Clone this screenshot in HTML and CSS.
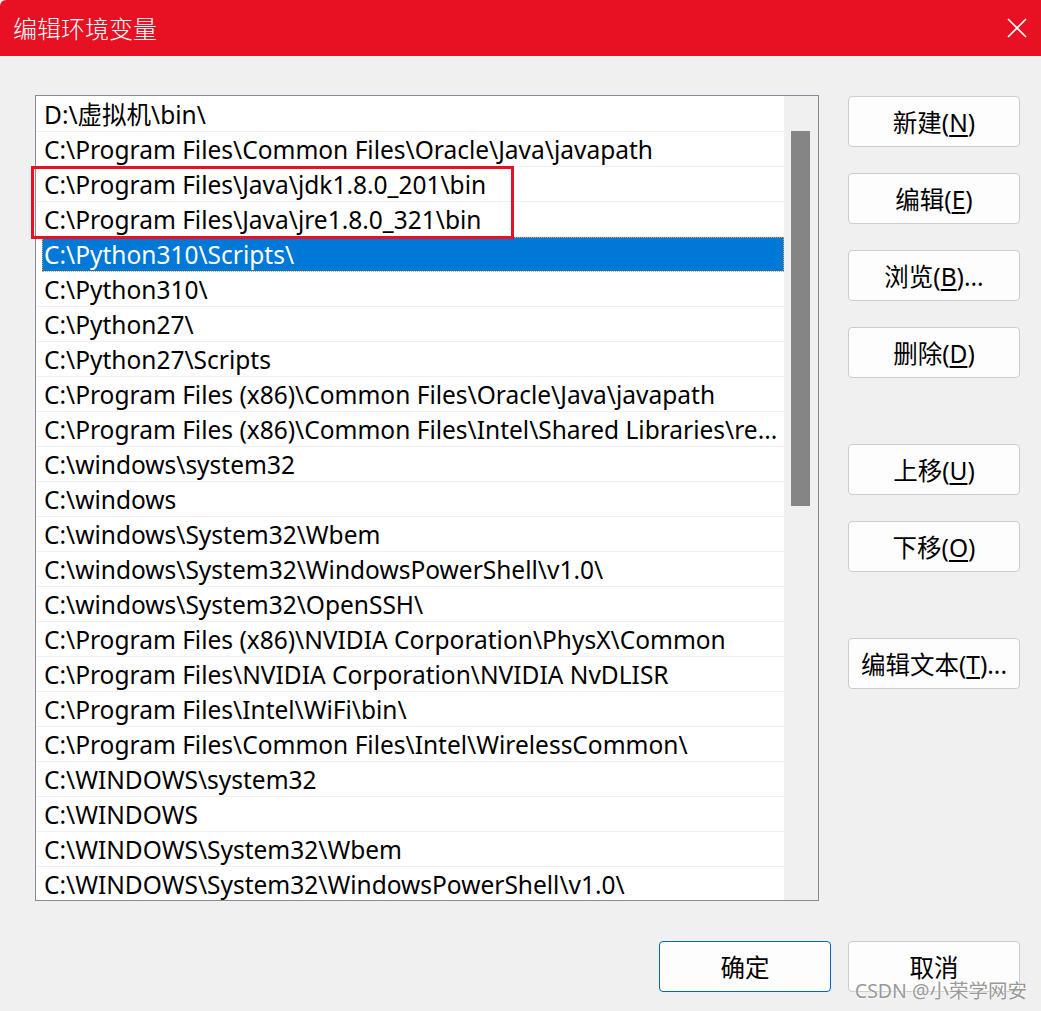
FILE: index.html
```html
<!DOCTYPE html>
<html lang="zh-CN">
<head>
    <meta charset="UTF-8">
    <meta name="viewport" content="width=device-width, initial-scale=1.0">
    <title>编辑环境变量</title>
    <link rel="stylesheet" href="styles.css">
</head>
<body>

<div class="window">
    <div class="titlebar">
        <span class="title">编辑环境变量</span>
        <svg class="close" width="20" height="20" viewBox="0 0 20 20">
            <path d="M1 1 L19 19 M19 1 L1 19" stroke="#fff" stroke-width="1.6" fill="none"/>
        </svg>
    </div>

    <div class="main">
        <div class="listbox">
            <div class="rows">
                <div class="row">D:\虚拟机\bin\</div>
                <div class="row">C:\Program Files\Common Files\Oracle\Java\javapath</div>
                <div class="row">C:\Program Files\Java\jdk1.8.0_201\bin</div>
                <div class="row">C:\Program Files\Java\jre1.8.0_321\bin</div>
                <div class="row selected">C:\Python310\Scripts\</div>
                <div class="row">C:\Python310\</div>
                <div class="row">C:\Python27\</div>
                <div class="row">C:\Python27\Scripts</div>
                <div class="row">C:\Program Files (x86)\Common Files\Oracle\Java\javapath</div>
                <div class="row">C:\Program Files (x86)\Common Files\Intel\Shared Libraries\re...</div>
                <div class="row">C:\windows\system32</div>
                <div class="row">C:\windows</div>
                <div class="row">C:\windows\System32\Wbem</div>
                <div class="row">C:\windows\System32\WindowsPowerShell\v1.0\</div>
                <div class="row">C:\windows\System32\OpenSSH\</div>
                <div class="row">C:\Program Files (x86)\NVIDIA Corporation\PhysX\Common</div>
                <div class="row">C:\Program Files\NVIDIA Corporation\NVIDIA NvDLISR</div>
                <div class="row">C:\Program Files\Intel\WiFi\bin\</div>
                <div class="row">C:\Program Files\Common Files\Intel\WirelessCommon\</div>
                <div class="row">C:\WINDOWS\system32</div>
                <div class="row">C:\WINDOWS</div>
                <div class="row">C:\WINDOWS\System32\Wbem</div>
                <div class="row">C:\WINDOWS\System32\WindowsPowerShell\v1.0\</div>
            </div>
            <div class="scrollbar">
                <div class="thumb"></div>
            </div>
            <div class="mark"></div>
        </div>

        <div class="actions">
            <button class="btn">新建(<u>N</u>)</button>
            <button class="btn">编辑(<u>E</u>)</button>
            <button class="btn">浏览(<u>B</u>)...</button>
            <button class="btn">删除(<u>D</u>)</button>
            <button class="btn group">上移(<u>U</u>)</button>
            <button class="btn">下移(<u>O</u>)</button>
            <button class="btn group">编辑文本(<u>T</u>)...</button>
        </div>
    </div>

    <div class="footer">
        <button class="btn primary">确定</button>
        <button class="btn">取消</button>
        <span class="watermark">CSDN @小荣学网安</span>
    </div>
</div>

</body>
</html>
```

FILE: styles.css
```css
html, body {
    margin: 0;
    padding: 0;
    background-color: #f0f0f0;
}
body {
    font-family: "Noto Sans", "Noto Sans CJK SC", sans-serif;
    color: #000;
}
.window {
    width: 1041px;
    height: 1011px;
    position: relative;
    background-color: #f0f0f0;
}
.titlebar {
    height: 56px;
    background-color: #e81123;
    border-top-left-radius: 6px;
    display: flex;
    align-items: center;
    justify-content: space-between;
    padding: 0 14px 0 13px;
    box-sizing: border-box;
}
.title {
    color: #fff;
    font-family: "Noto Sans CJK SC", sans-serif;
    font-weight: 300;
    font-size: 24px;
    margin-top: -2px;
}
.close {
    margin-top: -1px;
}
.main {
    display: flex;
    padding: 39px 0 0 35px;
}
.listbox {
    position: relative;
    display: flex;
    width: 784px;
    height: 806px;
    border: 1px solid #868a91;
    box-sizing: border-box;
    background-color: #fff;
}
.rows {
    width: 748px;
    padding-top: 1px;
    overflow: hidden;
}
.row {
    height: 35px;
    line-height: 36px;
    padding-left: 8px;
    border-bottom: 1px solid #f0f0f0;
    box-sizing: border-box;
    font-size: 24.5px;
    white-space: nowrap;
    overflow: hidden;
}
.row.selected {
    margin-left: 6px;
    padding-left: 2px;
    background-color: #0078d7;
    color: #fff;
    border-bottom-color: #fff;
    outline: 1px dotted #f0a040;
    outline-offset: -1px;
}
.scrollbar {
    width: 34px;
    background-color: #f0f0f0;
}
.thumb {
    margin: 35px 0 0 7px;
    width: 19px;
    height: 375px;
    background-color: #858585;
}
.mark {
    position: absolute;
    left: -5px;
    top: 70px;
    width: 483px;
    height: 73px;
    border: 3px solid #e81123;
    box-sizing: border-box;
}
.actions {
    display: flex;
    flex-direction: column;
    gap: 26px;
    margin-left: 29px;
    padding-top: 1px;
}
.btn {
    width: 172px;
    height: 51px;
    background-color: #fdfdfd;
    border: 1px solid #cccccc;
    border-radius: 4px;
    font-family: "Noto Sans", "Noto Sans CJK SC", sans-serif;
    font-size: 24.5px;
    color: #000;
    padding: 0;
    cursor: pointer;
}
.btn u {
    text-underline-offset: 3px;
}
.actions .group {
    margin-top: 40px;
}
.footer {
    display: flex;
    justify-content: flex-end;
    gap: 17px;
    padding: 40px 21px 0 0;
}
.btn.primary {
    border: 1px solid #0067c0;
}
.watermark {
    position: absolute;
    right: 14px;
    bottom: 7px;
    font-size: 19.5px;
    color: #999;
    text-shadow: 0 0 2px #fff, 0 0 2px #fff;
}
```
